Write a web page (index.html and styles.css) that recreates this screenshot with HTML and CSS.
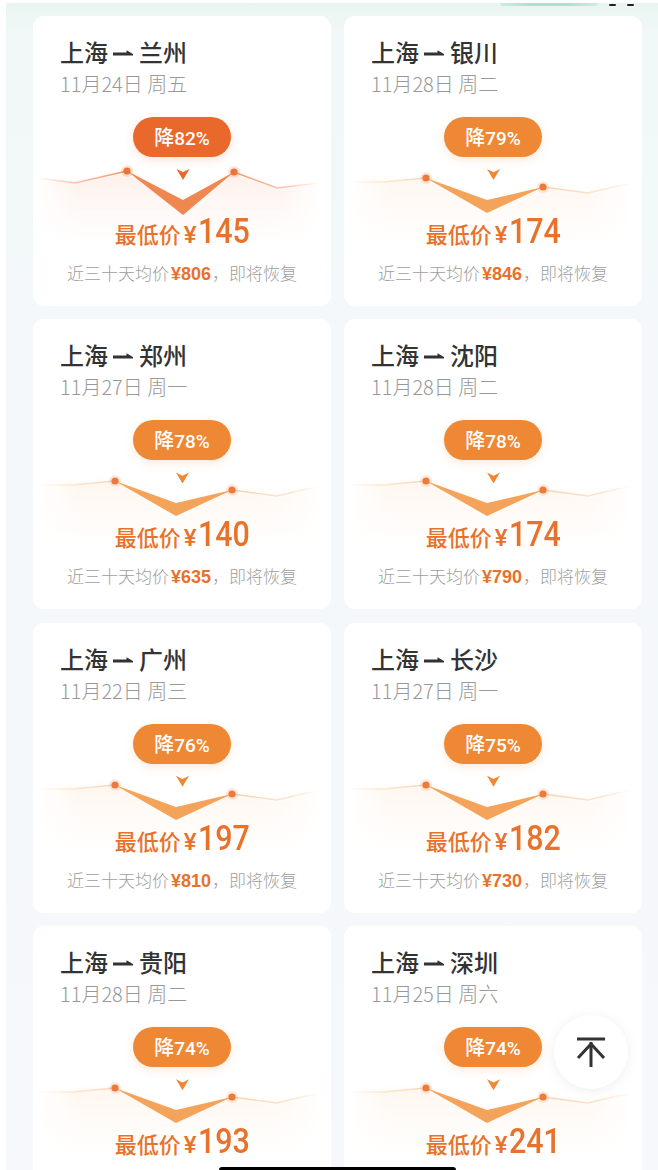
FILE: index.html
```html
<!DOCTYPE html>
<html lang="zh">
<head>
<meta charset="utf-8">
<title>低价航线</title>
<link rel="stylesheet" href="styles.css">
</head>
<body>
<svg class="defs" width="0" height="0" aria-hidden="true">
  <defs>
    <linearGradient id="fade-a" x1="0" y1="0" x2="0" y2="1"><stop offset="0" stop-color="#f6a27c" stop-opacity=".17"/><stop offset=".55" stop-color="#f9c3a6" stop-opacity=".09"/><stop offset="1" stop-color="#fbd9c7" stop-opacity="0"/></linearGradient>
    <linearGradient id="fade-b" x1="0" y1="0" x2="0" y2="1"><stop offset="0" stop-color="#fbc48c" stop-opacity=".13"/><stop offset=".55" stop-color="#fbd0a4" stop-opacity=".07"/><stop offset="1" stop-color="#fde2c4" stop-opacity="0"/></linearGradient>
    <linearGradient id="line-a" x1="0" y1="0" x2="1" y2="0"><stop offset="0" stop-color="#f6b194" stop-opacity="0"/><stop offset=".12" stop-color="#f6b194" stop-opacity=".7"/><stop offset=".3" stop-color="#ef9a70"/><stop offset=".7" stop-color="#ef9a70"/><stop offset=".88" stop-color="#f6b194" stop-opacity=".7"/><stop offset="1" stop-color="#f6b194" stop-opacity="0"/></linearGradient>
    <linearGradient id="line-b" x1="0" y1="0" x2="1" y2="0"><stop offset="0" stop-color="#fbd5ae" stop-opacity="0"/><stop offset=".15" stop-color="#fbdcbc" stop-opacity=".7"/><stop offset=".3" stop-color="#f9d3ac"/><stop offset=".7" stop-color="#f9d3ac"/><stop offset=".9" stop-color="#fbdcbc" stop-opacity=".7"/><stop offset="1" stop-color="#fbd5ae" stop-opacity="0"/></linearGradient>
    <linearGradient id="edge-x" x1="0" y1="0" x2="1" y2="0"><stop offset="0" stop-color="#fff" stop-opacity="0"/><stop offset=".14" stop-color="#fff"/><stop offset=".86" stop-color="#fff"/><stop offset="1" stop-color="#fff" stop-opacity="0"/></linearGradient>
    <mask id="edge-mask" maskUnits="userSpaceOnUse" x="0" y="140" width="298" height="110"><rect x="4" y="140" width="284" height="110" fill="url(#edge-x)"/></mask>
    <filter id="soft" x="-5%" y="-10%" width="110%" height="120%"><feGaussianBlur stdDeviation="2"/></filter>
    <filter id="soft-line" x="-5%" y="-50%" width="110%" height="200%"><feGaussianBlur stdDeviation=".4"/></filter>
    <symbol id="chart-a" viewBox="0 0 298 290">
      <g mask="url(#edge-mask)"><path d="M4 162 42 167 94 155 150 184 201 156 244 172 287 167V234H4Z" fill="url(#fade-a)" filter="url(#soft)"/></g>
      <path d="M4 162 42 167 94 155M201 156 244 172 287 167" fill="none" stroke="url(#line-a)" stroke-width="1.4" filter="url(#soft-line)"/>
      <path d="M94 155 150 184 201 156 150 199Z" fill="#ee8850"/>
      <circle cx="94" cy="155" r="6" fill="#ea7338" opacity=".18"/>
      <circle cx="201" cy="156" r="6" fill="#ea7338" opacity=".18"/>
      <circle cx="94" cy="155" r="3.6" fill="#ea7338"/>
      <circle cx="201" cy="156" r="3.6" fill="#ea7338"/>
      <path d="M143.500 153 150 156 156.500 153 150 164Z" fill="#e9682b"/>
    </symbol>
    <symbol id="chart-b" viewBox="0 0 298 290">
      <g mask="url(#edge-mask)"><path d="M4 166 82 162 143 184 199 171 244 177 287 169V234H4Z" fill="url(#fade-b)" filter="url(#soft)"/></g>
      <path d="M4 166 40 166 82 162M199 171 244 177 273 170 287 168" fill="none" stroke="url(#line-b)" stroke-width="1.4" filter="url(#soft-line)"/>
      <path d="M82 162 143 184 199 171 143 197Z" fill="#f3a35a"/>
      <circle cx="82" cy="162" r="6" fill="#ec7a3a" opacity=".16"/>
      <circle cx="199" cy="171" r="6" fill="#ec7a3a" opacity=".16"/>
      <circle cx="82" cy="162" r="3.6" fill="#ec7a3a"/>
      <circle cx="199" cy="171" r="3.6" fill="#ec7a3a"/>
    </symbol>
    <symbol id="route-arrow" viewBox="0 0 20 8">
      <path d="M0 7.500H20V6L13.500 2.300V4.500H0Z" fill="#333"/>
    </symbol>
  </defs>
</svg>

<div class="deco-blob"></div>
<div class="deco-dash deco-dash-one"></div>
<div class="deco-dash deco-dash-two"></div>

<main class="page">
  <div class="grid">

    <article class="card">
      <svg class="chart"><use href="#chart-a"/></svg>
      <h2 class="route"><span>上海</span><svg class="route-arrow"><use href="#route-arrow"/></svg><span>兰州</span></h2>
      <p class="date">11月24日 周五</p>
      <div class="badge badge-hot">降<span class="badge-num">82%</span></div>
      <p class="price">最低价<span class="yen">¥</span><span class="num">145</span></p>
      <p class="foot">近三十天均价<b>¥806</b>，即将恢复</p>
    </article>

    <article class="card">
      <svg class="chart"><use href="#chart-b"/></svg>
      <span class="chev"></span>
      <h2 class="route"><span>上海</span><svg class="route-arrow"><use href="#route-arrow"/></svg><span>银川</span></h2>
      <p class="date">11月28日 周二</p>
      <div class="badge">降<span class="badge-num">79%</span></div>
      <p class="price">最低价<span class="yen">¥</span><span class="num">174</span></p>
      <p class="foot">近三十天均价<b>¥846</b>，即将恢复</p>
    </article>

    <article class="card">
      <svg class="chart"><use href="#chart-b"/></svg>
      <span class="chev"></span>
      <h2 class="route"><span>上海</span><svg class="route-arrow"><use href="#route-arrow"/></svg><span>郑州</span></h2>
      <p class="date">11月27日 周一</p>
      <div class="badge">降<span class="badge-num">78%</span></div>
      <p class="price">最低价<span class="yen">¥</span><span class="num">140</span></p>
      <p class="foot">近三十天均价<b>¥635</b>，即将恢复</p>
    </article>

    <article class="card">
      <svg class="chart"><use href="#chart-b"/></svg>
      <span class="chev"></span>
      <h2 class="route"><span>上海</span><svg class="route-arrow"><use href="#route-arrow"/></svg><span>沈阳</span></h2>
      <p class="date">11月28日 周二</p>
      <div class="badge">降<span class="badge-num">78%</span></div>
      <p class="price">最低价<span class="yen">¥</span><span class="num">174</span></p>
      <p class="foot">近三十天均价<b>¥790</b>，即将恢复</p>
    </article>

    <article class="card">
      <svg class="chart"><use href="#chart-b"/></svg>
      <span class="chev"></span>
      <h2 class="route"><span>上海</span><svg class="route-arrow"><use href="#route-arrow"/></svg><span>广州</span></h2>
      <p class="date">11月22日 周三</p>
      <div class="badge">降<span class="badge-num">76%</span></div>
      <p class="price">最低价<span class="yen">¥</span><span class="num">197</span></p>
      <p class="foot">近三十天均价<b>¥810</b>，即将恢复</p>
    </article>

    <article class="card">
      <svg class="chart"><use href="#chart-b"/></svg>
      <span class="chev"></span>
      <h2 class="route"><span>上海</span><svg class="route-arrow"><use href="#route-arrow"/></svg><span>长沙</span></h2>
      <p class="date">11月27日 周一</p>
      <div class="badge">降<span class="badge-num">75%</span></div>
      <p class="price">最低价<span class="yen">¥</span><span class="num">182</span></p>
      <p class="foot">近三十天均价<b>¥730</b>，即将恢复</p>
    </article>

    <article class="card">
      <svg class="chart"><use href="#chart-b"/></svg>
      <span class="chev"></span>
      <h2 class="route"><span>上海</span><svg class="route-arrow"><use href="#route-arrow"/></svg><span>贵阳</span></h2>
      <p class="date">11月28日 周二</p>
      <div class="badge">降<span class="badge-num">74%</span></div>
      <p class="price">最低价<span class="yen">¥</span><span class="num">193</span></p>
    </article>

    <article class="card">
      <svg class="chart"><use href="#chart-b"/></svg>
      <span class="chev"></span>
      <h2 class="route"><span>上海</span><svg class="route-arrow"><use href="#route-arrow"/></svg><span>深圳</span></h2>
      <p class="date">11月25日 周六</p>
      <div class="badge">降<span class="badge-num">74%</span></div>
      <p class="price">最低价<span class="yen">¥</span><span class="num">241</span></p>
    </article>

  </div>
</main>

<button class="top-btn" type="button" aria-label="回到顶部">
  <svg width="30" height="30" viewBox="0 0 30 30" fill="none" stroke="#333" stroke-width="3">
    <path d="M1 2H29"/>
    <path d="M15 30V5"/>
    <path d="M2 21 15 7 28 21"/>
  </svg>
</button>
<div class="home-bar"></div>
</body>
</html>
```
FILE: styles.css
```css
* { box-sizing: border-box; }

html, body {
  margin: 0;
  padding: 0;
  height: 1170px;
  overflow: hidden;
  background: #fff;
}

body {
  position: relative;
  font-family: "Noto Sans CJK SC", "Noto Sans", sans-serif;
}

.defs { position: absolute; }

.page {
  margin: 3px 0 0 6px;
  height: 1167px;
  padding: 13px 0 0 27px;
  background: linear-gradient(180deg, #e9f5f1 0, #f1f8f7 30px, #f4f8fa 320px, #f6f8fb 100%);
}

.grid {
  display: grid;
  grid-template-columns: 298px 298px;
  column-gap: 13px;
  row-gap: 13.4px;
}

.card {
  position: relative;
  height: 290px;
  padding: 21px 27px 0;
  background: #fff;
  border-radius: 11px;
}

.chart {
  position: absolute;
  inset: 0;
  width: 298px;
  height: 290px;
}

.chev {
  position: absolute;
  left: 143px;
  top: 153px;
  width: 13px;
  height: 11px;
  background: #ee8835;
  clip-path: polygon(0 0, 50% 30%, 100% 0, 50% 100%);
}

.route {
  position: relative;
  display: flex;
  align-items: center;
  margin: 0;
  height: 30px;
  font-size: 24px;
  font-weight: 500;
  color: #333;
  line-height: 30px;
}

.route-arrow {
  width: 20px;
  height: 8px;
  margin: 0 6px 0 5px;
}

.date {
  position: relative;
  margin: 2px 0 0;
  font-size: 20px;
  font-weight: 300;
  line-height: 30px;
  color: #999;
}

.badge {
  position: relative;
  width: 98px;
  height: 40px;
  margin: 18px auto 0;
  border-radius: 20px;
  background: #ee8835;
  box-shadow: 0 3px 10px rgba(238, 136, 53, .18);
  color: #fff;
  font-size: 20px;
  font-weight: 500;
  line-height: 39px;
  text-align: center;
}

.badge-hot {
  background: #e9682b;
  box-shadow: 0 3px 10px rgba(233, 104, 43, .18);
}

.badge-num {
  font-family: "Roboto", sans-serif;
  font-size: 19px;
  font-weight: 500;
}

.price {
  position: relative;
  margin: 55px -20px 0;
  height: 40px;
  color: #e8722c;
  font-size: 22px;
  font-weight: 500;
  line-height: 40px;
  text-align: center;
  white-space: nowrap;
}

.yen {
  margin-left: 3px;
  font-family: "Roboto", sans-serif;
  font-size: 24px;
}

.num {
  display: inline-block;
  margin: 0 -4px 0 -3px;
  font-family: "Roboto", sans-serif;
  font-size: 35px;
  font-weight: 500;
  transform: scaleX(.87);
}

.foot {
  position: relative;
  margin: 9px -20px 0;
  font-size: 17px;
  font-weight: 300;
  line-height: 24px;
  color: #9e9e9e;
  text-align: center;
  white-space: nowrap;
}

.foot b {
  margin: 0 1px 0 2px;
  font-family: "Liberation Sans", sans-serif;
  font-size: 18px;
  font-weight: 700;
  color: #e8722c;
}

.top-btn {
  position: absolute;
  left: 554px;
  top: 1015px;
  width: 74px;
  height: 74px;
  padding: 0;
  border: 0;
  border-radius: 50%;
  background: #fff;
  box-shadow: 0 2px 12px rgba(90, 100, 120, .1);
  display: flex;
  align-items: center;
  justify-content: center;
}

.home-bar {
  position: absolute;
  left: 219px;
  top: 1167px;
  width: 237px;
  height: 6px;
  border-radius: 3px;
  background: #000;
}

.deco-blob {
  position: absolute;
  left: 500px;
  top: 3px;
  width: 98px;
  height: 3px;
  border-radius: 0 0 8px 8px;
  background: linear-gradient(90deg, #cdeedd, #a9e4cb 30%, #a9e4cb 70%, #cdeedd);
  z-index: 1;
}

.deco-dash {
  position: absolute;
  top: 4px;
  width: 7px;
  height: 2px;
  border-radius: 1px;
  background: #222;
  z-index: 1;
}

.deco-dash-one { left: 609px; }
.deco-dash-two { left: 627px; }
```
